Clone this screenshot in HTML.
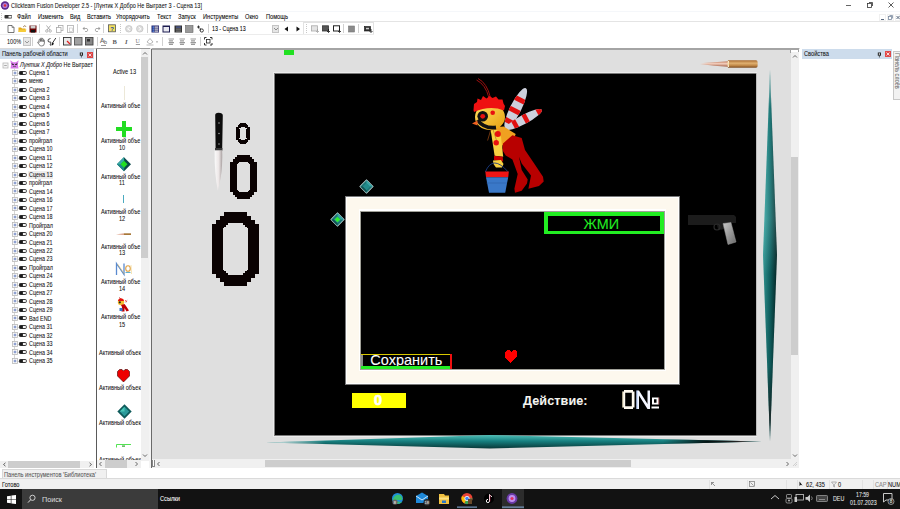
<!DOCTYPE html>
<html><head><meta charset="utf-8">
<style>
*{margin:0;padding:0;box-sizing:border-box}
html,body{width:900px;height:509px;overflow:hidden;background:#fff;font-family:"Liberation Sans",sans-serif;color:#000;position:relative}
.a{position:absolute}
.t{position:absolute;white-space:nowrap;font-size:6.5px;line-height:8px;transform-origin:0 0;-webkit-text-stroke:0.06px currentColor}
svg{position:absolute;overflow:visible}
</style></head><body>
<div class="a" style="left:0px;top:0px;width:900px;height:11px;background:#fff;"></div>
<svg style="left:0;top:0" width="11" height="11"><circle cx="5" cy="5.5" r="4.2" fill="#5b2a8c"/><circle cx="5" cy="5.5" r="2.6" fill="#b07ad8"/><circle cx="5" cy="5.5" r="1.2" fill="#e03030"/></svg>
<div class="t" style="left:11px;top:1.5px;font-size:6.5px;color:#111;transform:scaleX(0.847);">Clickteam Fusion Developer 2.5 - [Лунтик X Добро Не Выграет 3 - Сцена 13]</div>
<div class="a" style="left:846px;top:4.5px;width:5px;height:1px;background:#666;"></div>
<svg style="left:866px;top:1px" width="8" height="8"><rect x="1.5" y="2.5" width="4" height="4" fill="none" stroke="#333" stroke-width="0.8"/><path d="M3 1.5H6.5V5" fill="none" stroke="#333" stroke-width="0.8"/></svg>
<svg style="left:887px;top:1px" width="8" height="8"><path d="M1.5 1.5L6.5 6.5M6.5 1.5L1.5 6.5" stroke="#333" stroke-width="0.8"/></svg>
<div class="a" style="left:1px;top:13px;width:1px;height:1px;background:#c8c8c8;"></div>
<div class="a" style="left:1px;top:15px;width:1px;height:1px;background:#c8c8c8;"></div>
<div class="a" style="left:1px;top:17px;width:1px;height:1px;background:#c8c8c8;"></div>
<div class="a" style="left:1px;top:19px;width:1px;height:1px;background:#c8c8c8;"></div>
<svg style="left:4px;top:14px" width="9" height="6"><rect x="0.5" y="1" width="7.5" height="3.5" rx="0.8" fill="#333"/><rect x="4.5" y="1.8" width="3" height="1.9" fill="#f4f4f4"/></svg>
<div class="t" style="left:17px;top:13px;font-size:6.5px;color:#000;transform:scaleX(0.87);">Файл</div>
<div class="t" style="left:38px;top:13px;font-size:6.5px;color:#000;transform:scaleX(0.87);">Изменить</div>
<div class="t" style="left:70px;top:13px;font-size:6.5px;color:#000;transform:scaleX(0.87);">Вид</div>
<div class="t" style="left:87px;top:13px;font-size:6.5px;color:#000;transform:scaleX(0.87);">Вставить</div>
<div class="t" style="left:116px;top:13px;font-size:6.5px;color:#000;transform:scaleX(0.87);">Упорядочить</div>
<div class="t" style="left:157px;top:13px;font-size:6.5px;color:#000;transform:scaleX(0.87);">Текст</div>
<div class="t" style="left:178px;top:13px;font-size:6.5px;color:#000;transform:scaleX(0.87);">Запуск</div>
<div class="t" style="left:203px;top:13px;font-size:6.5px;color:#000;transform:scaleX(0.87);">Инструменты</div>
<div class="t" style="left:245px;top:13px;font-size:6.5px;color:#000;transform:scaleX(0.87);">Окно</div>
<div class="t" style="left:266px;top:13px;font-size:6.5px;color:#000;transform:scaleX(0.87);">Помощь</div>
<div class="a" style="left:879px;top:14px;width:7px;height:7px;background:#fff;border:1px solid #f0f0f0"></div>
<div class="a" style="left:887px;top:14px;width:7px;height:7px;background:#fff;border:1px solid #f0f0f0"></div>
<div class="a" style="left:895px;top:14px;width:5px;height:7px;background:#fff;border:1px solid #f0f0f0"></div>
<div class="a" style="left:881px;top:19px;width:3px;height:1px;background:#5a6a80;"></div>
<div class="a" style="left:0px;top:10.5px;width:900px;height:1px;background:#f5f7fa;"></div>
<svg style="left:887px;top:14px" width="7" height="7"><rect x="1.5" y="2.5" width="3" height="3" fill="none" stroke="#7a8aa0" stroke-width="0.8"/><path d="M2.5 1.5H5.5V4.5" fill="none" stroke="#7a8aa0" stroke-width="0.8"/></svg>
<svg style="left:895px;top:14px" width="6" height="7"><path d="M1.5 2L4.5 5M4.5 2L1.5 5" stroke="#5a6a80" stroke-width="1"/></svg>
<div class="a" style="left:0px;top:21px;width:900px;height:1px;background:#e4e4e4;"></div>
<svg style="left:7px;top:25px" width="8" height="8"><path d="M1 0.5H5L7 2.5V7.5H1Z" fill="#fff" stroke="#555" stroke-width="0.8"/><path d="M5 0.5V2.5H7" fill="none" stroke="#555" stroke-width="0.6"/></svg>
<svg style="left:18px;top:25px" width="9" height="8"><path d="M0.5 2.5H3L4 3.5H7.5V7H0.5Z" fill="#e2a618"/><path d="M1.5 4.5H8.5L7.5 7H0.5Z" fill="#f6cc3a"/><path d="M5 2L7 0.5L8 2" fill="none" stroke="#7a4a10" stroke-width="0.6"/></svg>
<svg style="left:29px;top:25px" width="8" height="8"><rect x="0.5" y="0.5" width="7" height="7" fill="#6a0000"/><rect x="1.5" y="0.5" width="5" height="3" fill="#d0d0d0"/><rect x="2" y="5" width="4" height="2.5" fill="#111"/></svg>
<div class="a" style="left:39px;top:24px;width:1px;height:9px;background:#d0d0d0;"></div>
<svg style="left:45px;top:25px" width="7" height="8"><path d="M1.5 0.5L5 5M5.5 0.5L2 5" stroke="#9a9a9a" stroke-width="0.8" fill="none"/><circle cx="1.8" cy="6" r="1.2" fill="none" stroke="#9a9a9a" stroke-width="0.7"/><circle cx="5.2" cy="6" r="1.2" fill="none" stroke="#9a9a9a" stroke-width="0.7"/></svg>
<svg style="left:56px;top:25px" width="8" height="8"><rect x="2.5" y="0.5" width="4.5" height="5" fill="#fff" stroke="#aaa" stroke-width="0.8"/><rect x="0.5" y="2.5" width="4.5" height="5" fill="#fff" stroke="#aaa" stroke-width="0.8"/></svg>
<svg style="left:67px;top:25px" width="8" height="8"><rect x="0.5" y="0.5" width="6" height="7" fill="#fff" stroke="#b0b0b0" stroke-width="0.8"/><rect x="2.5" y="3" width="3" height="3.5" fill="none" stroke="#c0c0c0" stroke-width="0.6"/></svg>
<div class="a" style="left:77px;top:24px;width:1px;height:9px;background:#d0d0d0;"></div>
<svg style="left:82px;top:26px" width="8" height="6"><path d="M1 2.5H5A2 2 0 0 1 5 5.5H3" fill="none" stroke="#999" stroke-width="0.8"/><path d="M0.5 2.5L2.5 0.8V4.2Z" fill="#999"/></svg>
<svg style="left:93px;top:26px" width="8" height="6"><path d="M7 2.5H3A2 2 0 0 0 3 5.5H5" fill="none" stroke="#999" stroke-width="0.8"/><path d="M7.5 2.5L5.5 0.8V4.2Z" fill="#999"/></svg>
<div class="a" style="left:103px;top:24px;width:1px;height:9px;background:#d0d0d0;"></div>
<svg style="left:108px;top:24px" width="8" height="9"><rect x="0.5" y="0.8" width="7" height="7" fill="#f4e060" stroke="#555" stroke-width="0.8"/><text x="2.2" y="6.5" font-size="6" font-weight="bold" fill="#2040a0" font-family="Liberation Sans">?</text></svg>
<div class="a" style="left:120px;top:24px;width:1px;height:1px;background:#c8c8c8;"></div>
<div class="a" style="left:120px;top:26px;width:1px;height:1px;background:#c8c8c8;"></div>
<div class="a" style="left:120px;top:28px;width:1px;height:1px;background:#c8c8c8;"></div>
<div class="a" style="left:120px;top:30px;width:1px;height:1px;background:#c8c8c8;"></div>
<div class="a" style="left:120px;top:32px;width:1px;height:1px;background:#c8c8c8;"></div>
<svg style="left:125px;top:25px" width="8" height="8"><circle cx="3.8" cy="3.8" r="3.3" fill="#ddd" stroke="#bbb" stroke-width="0.6"/><path d="M5 2L2.5 3.8L5 5.6" fill="none" stroke="#fff" stroke-width="1"/></svg>
<svg style="left:136px;top:25px" width="8" height="8"><circle cx="3.8" cy="3.8" r="3.3" fill="#ddd" stroke="#bbb" stroke-width="0.6"/><path d="M2.6 2L5.1 3.8L2.6 5.6" fill="none" stroke="#fff" stroke-width="1"/></svg>
<div class="a" style="left:147px;top:24px;width:1px;height:9px;background:#d0d0d0;"></div>
<svg style="left:151px;top:25px" width="9" height="8"><rect x="0.5" y="0.5" width="7.5" height="7" fill="#22226a"/><rect x="1.5" y="1.5" width="1.5" height="1.2" fill="#5aa0ff"/><rect x="3.5" y="1.5" width="3.8" height="1.2" fill="#ddd"/><rect x="1.5" y="3.5" width="1.5" height="1.2" fill="#5aa0ff"/><rect x="3.5" y="3.5" width="3.8" height="1.2" fill="#ddd"/><rect x="1.5" y="5.5" width="1.5" height="1.2" fill="#5aa0ff"/><rect x="3.5" y="5.5" width="3.8" height="1.2" fill="#ddd"/></svg>
<svg style="left:162px;top:25px" width="9" height="8"><rect x="0.5" y="0.5" width="7.5" height="7" fill="#1c1c50"/><rect x="1.5" y="2" width="5.5" height="4.5" fill="#e8e8f0"/></svg>
<svg style="left:174px;top:25px" width="9" height="8"><rect x="0.5" y="0.5" width="7.5" height="7" fill="#333"/><rect x="2" y="1.5" width="5" height="1.2" fill="#5060a0"/><rect x="2" y="3.5" width="5" height="1.2" fill="#777"/><rect x="2" y="5.5" width="5" height="1.2" fill="#777"/></svg>
<svg style="left:185px;top:25px" width="9" height="8"><rect x="0.5" y="0.5" width="7.5" height="7" fill="#9a9a9a" stroke="#666" stroke-width="0.6"/></svg>
<svg style="left:196px;top:25px" width="9" height="8"><path d="M1 2H4M2.5 0.5V3.5" stroke="#111" stroke-width="0.8"/><circle cx="5.8" cy="5.5" r="1.6" fill="none" stroke="#111" stroke-width="0.8"/><path d="M4.2 3V5.5" stroke="#111" stroke-width="0.8"/></svg>
<div class="a" style="left:208px;top:24px;width:1px;height:9px;background:#d0d0d0;"></div>
<div class="t" style="left:212px;top:25px;font-size:6.5px;color:#000;transform:scaleX(0.815);">13 - Сцена 13</div>
<div class="a" style="left:272px;top:25px;width:7px;height:8px;background:#e6e6e6;border:1px solid #c4c4c4"></div>
<svg style="left:273px;top:27px" width="6" height="4"><path d="M1 1L3 3L5 1" fill="none" stroke="#666" stroke-width="0.7"/></svg>
<svg style="left:284px;top:26px" width="5" height="6"><path d="M4 0.5V5.5L0.5 3Z" fill="#111"/></svg>
<svg style="left:296px;top:26px" width="5" height="6"><path d="M0.5 0.5V5.5L4 3Z" fill="#111"/></svg>
<div class="a" style="left:303px;top:24px;width:1px;height:9px;background:#d0d0d0;"></div>
<div class="a" style="left:306px;top:24px;width:1px;height:1px;background:#c8c8c8;"></div>
<div class="a" style="left:306px;top:26px;width:1px;height:1px;background:#c8c8c8;"></div>
<div class="a" style="left:306px;top:28px;width:1px;height:1px;background:#c8c8c8;"></div>
<div class="a" style="left:306px;top:30px;width:1px;height:1px;background:#c8c8c8;"></div>
<div class="a" style="left:306px;top:32px;width:1px;height:1px;background:#c8c8c8;"></div>
<div class="a" style="left:303px;top:22px;width:71px;height:13px;background:transparent;border:1px solid #e2e2e2"></div>
<div class="a" style="left:343px;top:24px;width:1px;height:9px;background:#d0d0d0;"></div>
<svg style="left:348px;top:25px" width="7" height="8"><rect x="0.5" y="1" width="6" height="6" fill="#8a8a8a" stroke="#777" stroke-width="0.6"/></svg>
<div class="a" style="left:358px;top:24px;width:1px;height:9px;background:#d0d0d0;"></div>
<svg style="left:364px;top:25px" width="9" height="8"><rect x="0.5" y="1.5" width="6" height="4.5" fill="#333" stroke="#111" stroke-width="0.6"/><rect x="2" y="2.8" width="3" height="1.5" fill="#ccc"/><path d="M7 4V7.2M5.5 6L7 7.5L8.5 6" fill="none" stroke="#111" stroke-width="0.8"/></svg>
<svg style="left:311px;top:25px" width="8" height="8"><rect x="0.5" y="0.8" width="6" height="5.2" fill="#e4e4e4" stroke="#aaa" stroke-width="0.8"/><path d="M6.5 4V7.2M5 6L6.5 7.5L8 6" fill="none" stroke="#999" stroke-width="0.7"/></svg>
<svg style="left:322px;top:25px" width="8" height="8"><rect x="0.5" y="0.8" width="6" height="5.2" fill="#555" stroke="#333" stroke-width="0.8"/><path d="M6.5 4V7.2M5 6L6.5 7.5L8 6" fill="none" stroke="#111" stroke-width="0.8"/></svg>
<svg style="left:333px;top:25px" width="8" height="8"><rect x="0.5" y="0.8" width="6" height="5.2" fill="#fff" stroke="#222" stroke-width="1"/><path d="M6.5 4V7.2M5 6L6.5 7.5L8 6" fill="none" stroke="#111" stroke-width="0.8"/></svg>
<div class="a" style="left:0px;top:34px;width:374px;height:1px;background:#ececec;"></div>
<div class="t" style="left:7px;top:37.5px;font-size:6.5px;color:#222;transform:scaleX(0.85);">100%</div>
<div class="a" style="left:23px;top:37px;width:8px;height:9px;background:#e6e6e6;border:1px solid #c4c4c4"></div>
<svg style="left:24px;top:40px" width="6" height="4"><path d="M1 1L3 3L5 1" fill="none" stroke="#777" stroke-width="0.7"/></svg>
<div class="a" style="left:32px;top:37px;width:1px;height:9px;background:#d0d0d0;"></div>
<svg style="left:37px;top:37px" width="9" height="10"><path d="M2 5.5V3Q2 2.2 2.7 2.2Q3.4 2.2 3.4 3V4.5V1.8Q3.4 1 4.1 1Q4.8 1 4.8 1.8V4.5V2.2Q4.8 1.4 5.5 1.4Q6.2 1.4 6.2 2.2V4.8V3.4Q6.2 2.8 6.8 2.8Q7.4 2.8 7.4 3.4V6Q7.4 9 4.8 9Q3 9 2 7.5L0.8 5.6Q0.5 4.8 1.2 4.8Q1.6 4.8 2 5.5Z" fill="#fff" stroke="#555" stroke-width="0.75"/></svg>
<svg style="left:47px;top:37px" width="10" height="10"><path d="M3.5 1.5Q0.5 2 1 4Q1.5 5.5 3 5Q4.5 4.5 3.5 6.5Q2.5 8.5 4 8.5" fill="none" stroke="#222" stroke-width="0.8"/><path d="M8.8 1L5.5 6" stroke="#222" stroke-width="0.9"/><path d="M5.8 5.5Q4.2 6.2 4.5 8.5Q6.5 8.2 6.8 6.4Z" fill="#111"/></svg>
<div class="a" style="left:59px;top:37px;width:1px;height:9px;background:#d0d0d0;"></div>
<svg style="left:63px;top:37px" width="9" height="9"><rect x="0.5" y="0.5" width="7.5" height="7.5" fill="#e8e8e8" stroke="#333" stroke-width="0.9"/><path d="M4 4L7 7" stroke="#e02020" stroke-width="1.2"/></svg>
<svg style="left:74px;top:37px" width="9" height="9"><rect x="0.5" y="0.5" width="7.5" height="7.5" fill="#a0a0a0" stroke="#555" stroke-width="0.9"/></svg>
<svg style="left:85px;top:37px" width="9" height="9"><rect x="0.5" y="0.5" width="7.5" height="7.5" fill="#888" stroke="#444" stroke-width="0.9"/><rect x="2" y="2" width="3" height="2.5" fill="#333"/></svg>
<div class="a" style="left:97px;top:37px;width:1px;height:9px;background:#d0d0d0;"></div>
<svg style="left:100px;top:37px" width="9" height="9"><text x="0" y="6" font-size="6.5" fill="#555" font-family="Liberation Sans">A</text><text x="4" y="7" font-size="5.5" fill="#555" font-family="Liberation Sans">b</text><path d="M1 8.5H6" stroke="#555" stroke-width="0.6"/></svg>
<svg style="left:112px;top:37px" width="8" height="9"><text x="0.5" y="6.8" font-size="6.5" font-weight="bold" fill="#5a5a5a" font-family="Liberation Serif">B</text></svg>
<svg style="left:124px;top:37px" width="8" height="9"><text x="1" y="6.8" font-size="6.5" font-style="italic" font-weight="bold" fill="#5a5a5a" font-family="Liberation Serif">I</text></svg>
<svg style="left:135px;top:37px" width="8" height="9"><text x="0.5" y="6" font-size="6" fill="#777" font-family="Liberation Serif">U</text><path d="M0.8 7.5H5" stroke="#777" stroke-width="0.7"/></svg>
<svg style="left:146px;top:37px" width="13" height="9"><path d="M1 5L4 1.5L7 5L4 7Z" fill="none" stroke="#999" stroke-width="0.7"/><path d="M0.5 8H7.5" stroke="#aaa" stroke-width="0.8"/><path d="M10 4.5L12 4.5L11 5.8Z" fill="#777"/></svg>
<div class="a" style="left:162px;top:37px;width:1px;height:9px;background:#d0d0d0;"></div>
<svg style="left:168px;top:38px" width="7" height="8"><path d="M0.5 1H6M1 2.8H5M0.5 4.6H6M1 6.4H5" stroke="#9a9a9a" stroke-width="1.2"/></svg>
<svg style="left:179px;top:38px" width="7" height="8"><path d="M0.5 1H6M1 2.8H5M0.5 4.6H6M1 6.4H5" stroke="#9a9a9a" stroke-width="1.2"/></svg>
<svg style="left:190px;top:38px" width="7" height="8"><path d="M0.5 1H6M1 2.8H5M0.5 4.6H6M1 6.4H5" stroke="#9a9a9a" stroke-width="1.2"/></svg>
<div class="a" style="left:200px;top:37px;width:1px;height:9px;background:#d0d0d0;"></div>
<svg style="left:204px;top:37px" width="9" height="9"><path d="M0.5 2.5V0.5H2.5M6 0.5H8V2.5M8 6V8H6M2.5 8H0.5V6" fill="none" stroke="#222" stroke-width="0.9"/><rect x="2.5" y="2.5" width="3.5" height="3.5" fill="none" stroke="#222" stroke-width="0.8"/></svg>
<div class="a" style="left:0px;top:48px;width:800px;height:1px;background:#dadada;"></div>
<div class="a" style="left:0px;top:49px;width:94px;height:10px;background:#cddcec;"></div>
<div class="t" style="left:2px;top:50px;font-size:6.5px;color:#111;transform:scaleX(0.87);">Панель рабочей области</div>
<svg style="left:78.5px;top:51.5px" width="5" height="6"><rect x="0.8" y="0.5" width="3.2" height="3.2" fill="#222"/><rect x="1.8" y="1.3" width="1.2" height="1.5" fill="#ddd"/><path d="M2.4 3.7V5.5" stroke="#222" stroke-width="0.7"/></svg>
<div class="a" style="left:86.5px;top:51.5px;width:6px;height:6px;background:#dc4444;"></div>
<svg style="left:86.5px;top:51.5px" width="6" height="6"><path d="M1.6 1.6L4.4 4.4M4.4 1.6L1.6 4.4" stroke="#fff" stroke-width="0.8"/></svg>
<svg style="left:2px;top:62px" width="7" height="7"><rect x="1" y="1" width="5" height="5" fill="#f4f4f4" stroke="#b8b8b8" stroke-width="0.8"/><path d="M2.2 3.5H4.8" stroke="#888" stroke-width="0.7"/></svg>
<svg style="left:10px;top:60px" width="9" height="9"><path d="M0.3 0.3L3 2.2H6L8.7 0.3L7.8 4.5L8.5 8.5H0.5L1.2 4.5Z" fill="#d878e8"/><path d="M1.5 3.2L4 4.2L3.5 5.2L1.8 4.6Z M7.5 3.2L5 4.2L5.5 5.2L7.2 4.6Z" fill="#222"/><path d="M3 6.5H6" stroke="#444" stroke-width="0.6"/></svg>
<div class="t" style="left:20px;top:61px;font-size:6.5px;color:#111;transform:scaleX(0.835);"><i>Лунтик X Добро</i> Не Выграет</div>
<div class="a" style="left:14px;top:68px;width:1px;height:292px;background:#d4d4d4;"></div>
<div class="a" style="left:17px;top:73.0px;width:2px;height:1px;background:#d0d0d0;"></div>
<svg style="left:11px;top:70.00px" width="7" height="7"><rect x="1.5" y="0.5" width="5" height="5" fill="#fafafa" stroke="#b8b8b8" stroke-width="0.8"/><path d="M2.6 3H5.4M4 1.6V4.4" stroke="#4060b0" stroke-width="0.7"/></svg>
<svg style="left:19px;top:71.00px" width="8" height="4"><rect x="0.5" y="0.5" width="6.8" height="3" rx="0.8" fill="#f4f4f4" stroke="#222" stroke-width="0.9"/><rect x="0.5" y="0.5" width="3.4" height="3" fill="#1a1a1a"/></svg>
<div class="t" style="left:29px;top:68.7px;font-size:6.5px;color:#111;transform:scaleX(0.83);">Сцена 1</div>
<div class="a" style="left:17px;top:81.46px;width:2px;height:1px;background:#d0d0d0;"></div>
<svg style="left:11px;top:78.46px" width="7" height="7"><rect x="1.5" y="0.5" width="5" height="5" fill="#fafafa" stroke="#b8b8b8" stroke-width="0.8"/><path d="M2.6 3H5.4M4 1.6V4.4" stroke="#4060b0" stroke-width="0.7"/></svg>
<svg style="left:19px;top:79.46px" width="8" height="4"><rect x="0.5" y="0.5" width="6.8" height="3" rx="0.8" fill="#f4f4f4" stroke="#222" stroke-width="0.9"/><rect x="0.5" y="0.5" width="3.4" height="3" fill="#1a1a1a"/></svg>
<div class="t" style="left:29px;top:77.19px;font-size:6.5px;color:#111;transform:scaleX(0.83);">меню</div>
<div class="a" style="left:17px;top:89.92px;width:2px;height:1px;background:#d0d0d0;"></div>
<svg style="left:11px;top:86.92px" width="7" height="7"><rect x="1.5" y="0.5" width="5" height="5" fill="#fafafa" stroke="#b8b8b8" stroke-width="0.8"/><path d="M2.6 3H5.4M4 1.6V4.4" stroke="#4060b0" stroke-width="0.7"/></svg>
<svg style="left:19px;top:87.92px" width="8" height="4"><rect x="0.5" y="0.5" width="6.8" height="3" rx="0.8" fill="#f4f4f4" stroke="#222" stroke-width="0.9"/><rect x="0.5" y="0.5" width="3.4" height="3" fill="#1a1a1a"/></svg>
<div class="t" style="left:29px;top:85.68px;font-size:6.5px;color:#111;transform:scaleX(0.83);">Сцена 2</div>
<div class="a" style="left:17px;top:98.38px;width:2px;height:1px;background:#d0d0d0;"></div>
<svg style="left:11px;top:95.38px" width="7" height="7"><rect x="1.5" y="0.5" width="5" height="5" fill="#fafafa" stroke="#b8b8b8" stroke-width="0.8"/><path d="M2.6 3H5.4M4 1.6V4.4" stroke="#4060b0" stroke-width="0.7"/></svg>
<svg style="left:19px;top:96.38px" width="8" height="4"><rect x="0.5" y="0.5" width="6.8" height="3" rx="0.8" fill="#f4f4f4" stroke="#222" stroke-width="0.9"/><rect x="0.5" y="0.5" width="3.4" height="3" fill="#1a1a1a"/></svg>
<div class="t" style="left:29px;top:94.17px;font-size:6.5px;color:#111;transform:scaleX(0.83);">Сцена 3</div>
<div class="a" style="left:17px;top:106.84px;width:2px;height:1px;background:#d0d0d0;"></div>
<svg style="left:11px;top:103.84px" width="7" height="7"><rect x="1.5" y="0.5" width="5" height="5" fill="#fafafa" stroke="#b8b8b8" stroke-width="0.8"/><path d="M2.6 3H5.4M4 1.6V4.4" stroke="#4060b0" stroke-width="0.7"/></svg>
<svg style="left:19px;top:104.84px" width="8" height="4"><rect x="0.5" y="0.5" width="6.8" height="3" rx="0.8" fill="#f4f4f4" stroke="#222" stroke-width="0.9"/><rect x="0.5" y="0.5" width="3.4" height="3" fill="#1a1a1a"/></svg>
<div class="t" style="left:29px;top:102.66px;font-size:6.5px;color:#111;transform:scaleX(0.83);">Сцена 4</div>
<div class="a" style="left:17px;top:115.3px;width:2px;height:1px;background:#d0d0d0;"></div>
<svg style="left:11px;top:112.30px" width="7" height="7"><rect x="1.5" y="0.5" width="5" height="5" fill="#fafafa" stroke="#b8b8b8" stroke-width="0.8"/><path d="M2.6 3H5.4M4 1.6V4.4" stroke="#4060b0" stroke-width="0.7"/></svg>
<svg style="left:19px;top:113.30px" width="8" height="4"><rect x="0.5" y="0.5" width="6.8" height="3" rx="0.8" fill="#f4f4f4" stroke="#222" stroke-width="0.9"/><rect x="0.5" y="0.5" width="3.4" height="3" fill="#1a1a1a"/></svg>
<div class="t" style="left:29px;top:111.15px;font-size:6.5px;color:#111;transform:scaleX(0.83);">Сцена 5</div>
<div class="a" style="left:17px;top:123.76px;width:2px;height:1px;background:#d0d0d0;"></div>
<svg style="left:11px;top:120.76px" width="7" height="7"><rect x="1.5" y="0.5" width="5" height="5" fill="#fafafa" stroke="#b8b8b8" stroke-width="0.8"/><path d="M2.6 3H5.4M4 1.6V4.4" stroke="#4060b0" stroke-width="0.7"/></svg>
<svg style="left:19px;top:121.76px" width="8" height="4"><rect x="0.5" y="0.5" width="6.8" height="3" rx="0.8" fill="#f4f4f4" stroke="#222" stroke-width="0.9"/><rect x="0.5" y="0.5" width="3.4" height="3" fill="#1a1a1a"/></svg>
<div class="t" style="left:29px;top:119.64px;font-size:6.5px;color:#111;transform:scaleX(0.83);">Сцена 6</div>
<div class="a" style="left:17px;top:132.22px;width:2px;height:1px;background:#d0d0d0;"></div>
<svg style="left:11px;top:129.22px" width="7" height="7"><rect x="1.5" y="0.5" width="5" height="5" fill="#fafafa" stroke="#b8b8b8" stroke-width="0.8"/><path d="M2.6 3H5.4M4 1.6V4.4" stroke="#4060b0" stroke-width="0.7"/></svg>
<svg style="left:19px;top:130.22px" width="8" height="4"><rect x="0.5" y="0.5" width="6.8" height="3" rx="0.8" fill="#f4f4f4" stroke="#222" stroke-width="0.9"/><rect x="0.5" y="0.5" width="3.4" height="3" fill="#1a1a1a"/></svg>
<div class="t" style="left:29px;top:128.13px;font-size:6.5px;color:#111;transform:scaleX(0.83);">Сцена 7</div>
<div class="a" style="left:17px;top:140.68px;width:2px;height:1px;background:#d0d0d0;"></div>
<svg style="left:11px;top:137.68px" width="7" height="7"><rect x="1.5" y="0.5" width="5" height="5" fill="#fafafa" stroke="#b8b8b8" stroke-width="0.8"/><path d="M2.6 3H5.4M4 1.6V4.4" stroke="#4060b0" stroke-width="0.7"/></svg>
<svg style="left:19px;top:138.68px" width="8" height="4"><rect x="0.5" y="0.5" width="6.8" height="3" rx="0.8" fill="#f4f4f4" stroke="#222" stroke-width="0.9"/><rect x="0.5" y="0.5" width="3.4" height="3" fill="#1a1a1a"/></svg>
<div class="t" style="left:29px;top:136.62px;font-size:6.5px;color:#111;transform:scaleX(0.83);">пройграл</div>
<div class="a" style="left:17px;top:149.14px;width:2px;height:1px;background:#d0d0d0;"></div>
<svg style="left:11px;top:146.14px" width="7" height="7"><rect x="1.5" y="0.5" width="5" height="5" fill="#fafafa" stroke="#b8b8b8" stroke-width="0.8"/><path d="M2.6 3H5.4M4 1.6V4.4" stroke="#4060b0" stroke-width="0.7"/></svg>
<svg style="left:19px;top:147.14px" width="8" height="4"><rect x="0.5" y="0.5" width="6.8" height="3" rx="0.8" fill="#f4f4f4" stroke="#222" stroke-width="0.9"/><rect x="0.5" y="0.5" width="3.4" height="3" fill="#1a1a1a"/></svg>
<div class="t" style="left:29px;top:145.11px;font-size:6.5px;color:#111;transform:scaleX(0.83);">Сцена 10</div>
<div class="a" style="left:17px;top:157.6px;width:2px;height:1px;background:#d0d0d0;"></div>
<svg style="left:11px;top:154.60px" width="7" height="7"><rect x="1.5" y="0.5" width="5" height="5" fill="#fafafa" stroke="#b8b8b8" stroke-width="0.8"/><path d="M2.6 3H5.4M4 1.6V4.4" stroke="#4060b0" stroke-width="0.7"/></svg>
<svg style="left:19px;top:155.60px" width="8" height="4"><rect x="0.5" y="0.5" width="6.8" height="3" rx="0.8" fill="#f4f4f4" stroke="#222" stroke-width="0.9"/><rect x="0.5" y="0.5" width="3.4" height="3" fill="#1a1a1a"/></svg>
<div class="t" style="left:29px;top:153.6px;font-size:6.5px;color:#111;transform:scaleX(0.83);">Сцена 11</div>
<div class="a" style="left:17px;top:166.06px;width:2px;height:1px;background:#d0d0d0;"></div>
<svg style="left:11px;top:163.06px" width="7" height="7"><rect x="1.5" y="0.5" width="5" height="5" fill="#fafafa" stroke="#b8b8b8" stroke-width="0.8"/><path d="M2.6 3H5.4M4 1.6V4.4" stroke="#4060b0" stroke-width="0.7"/></svg>
<svg style="left:19px;top:164.06px" width="8" height="4"><rect x="0.5" y="0.5" width="6.8" height="3" rx="0.8" fill="#f4f4f4" stroke="#222" stroke-width="0.9"/><rect x="0.5" y="0.5" width="3.4" height="3" fill="#1a1a1a"/></svg>
<div class="t" style="left:29px;top:162.09px;font-size:6.5px;color:#111;transform:scaleX(0.83);">Сцена 12</div>
<div class="a" style="left:17px;top:174.52px;width:2px;height:1px;background:#d0d0d0;"></div>
<svg style="left:11px;top:171.52px" width="7" height="7"><rect x="1.5" y="0.5" width="5" height="5" fill="#fafafa" stroke="#b8b8b8" stroke-width="0.8"/><path d="M2.6 3H5.4M4 1.6V4.4" stroke="#4060b0" stroke-width="0.7"/></svg>
<svg style="left:19px;top:172.52px" width="8" height="4"><rect x="0.5" y="0.5" width="6.8" height="3" rx="0.8" fill="#f4f4f4" stroke="#222" stroke-width="0.9"/><rect x="0.5" y="0.5" width="3.4" height="3" fill="#1a1a1a"/></svg>
<div class="a" style="left:28.3px;top:170.92px;width:24.5px;height:8.3px;background:#ededed;"></div>
<div class="t" style="left:29px;top:170.58px;font-size:6.5px;color:#111;transform:scaleX(0.83);">Сцена 13</div>
<div class="a" style="left:17px;top:182.98px;width:2px;height:1px;background:#d0d0d0;"></div>
<svg style="left:11px;top:179.98px" width="7" height="7"><rect x="1.5" y="0.5" width="5" height="5" fill="#fafafa" stroke="#b8b8b8" stroke-width="0.8"/><path d="M2.6 3H5.4M4 1.6V4.4" stroke="#4060b0" stroke-width="0.7"/></svg>
<svg style="left:19px;top:180.98px" width="8" height="4"><rect x="0.5" y="0.5" width="6.8" height="3" rx="0.8" fill="#f4f4f4" stroke="#222" stroke-width="0.9"/><rect x="0.5" y="0.5" width="3.4" height="3" fill="#1a1a1a"/></svg>
<div class="t" style="left:29px;top:179.07px;font-size:6.5px;color:#111;transform:scaleX(0.83);">пройграл</div>
<div class="a" style="left:17px;top:191.44px;width:2px;height:1px;background:#d0d0d0;"></div>
<svg style="left:11px;top:188.44px" width="7" height="7"><rect x="1.5" y="0.5" width="5" height="5" fill="#fafafa" stroke="#b8b8b8" stroke-width="0.8"/><path d="M2.6 3H5.4M4 1.6V4.4" stroke="#4060b0" stroke-width="0.7"/></svg>
<svg style="left:19px;top:189.44px" width="8" height="4"><rect x="0.5" y="0.5" width="6.8" height="3" rx="0.8" fill="#f4f4f4" stroke="#222" stroke-width="0.9"/><rect x="0.5" y="0.5" width="3.4" height="3" fill="#1a1a1a"/></svg>
<div class="t" style="left:29px;top:187.56px;font-size:6.5px;color:#111;transform:scaleX(0.83);">Сцена 14</div>
<div class="a" style="left:17px;top:199.9px;width:2px;height:1px;background:#d0d0d0;"></div>
<svg style="left:11px;top:196.90px" width="7" height="7"><rect x="1.5" y="0.5" width="5" height="5" fill="#fafafa" stroke="#b8b8b8" stroke-width="0.8"/><path d="M2.6 3H5.4M4 1.6V4.4" stroke="#4060b0" stroke-width="0.7"/></svg>
<svg style="left:19px;top:197.90px" width="8" height="4"><rect x="0.5" y="0.5" width="6.8" height="3" rx="0.8" fill="#f4f4f4" stroke="#222" stroke-width="0.9"/><rect x="0.5" y="0.5" width="3.4" height="3" fill="#1a1a1a"/></svg>
<div class="t" style="left:29px;top:196.05px;font-size:6.5px;color:#111;transform:scaleX(0.83);">Сцена 16</div>
<div class="a" style="left:17px;top:208.36px;width:2px;height:1px;background:#d0d0d0;"></div>
<svg style="left:11px;top:205.36px" width="7" height="7"><rect x="1.5" y="0.5" width="5" height="5" fill="#fafafa" stroke="#b8b8b8" stroke-width="0.8"/><path d="M2.6 3H5.4M4 1.6V4.4" stroke="#4060b0" stroke-width="0.7"/></svg>
<svg style="left:19px;top:206.36px" width="8" height="4"><rect x="0.5" y="0.5" width="6.8" height="3" rx="0.8" fill="#f4f4f4" stroke="#222" stroke-width="0.9"/><rect x="0.5" y="0.5" width="3.4" height="3" fill="#1a1a1a"/></svg>
<div class="t" style="left:29px;top:204.54px;font-size:6.5px;color:#111;transform:scaleX(0.83);">Сцена 17</div>
<div class="a" style="left:17px;top:216.82px;width:2px;height:1px;background:#d0d0d0;"></div>
<svg style="left:11px;top:213.82px" width="7" height="7"><rect x="1.5" y="0.5" width="5" height="5" fill="#fafafa" stroke="#b8b8b8" stroke-width="0.8"/><path d="M2.6 3H5.4M4 1.6V4.4" stroke="#4060b0" stroke-width="0.7"/></svg>
<svg style="left:19px;top:214.82px" width="8" height="4"><rect x="0.5" y="0.5" width="6.8" height="3" rx="0.8" fill="#f4f4f4" stroke="#222" stroke-width="0.9"/><rect x="0.5" y="0.5" width="3.4" height="3" fill="#1a1a1a"/></svg>
<div class="t" style="left:29px;top:213.03px;font-size:6.5px;color:#111;transform:scaleX(0.83);">Сцена 18</div>
<div class="a" style="left:17px;top:225.28px;width:2px;height:1px;background:#d0d0d0;"></div>
<svg style="left:11px;top:222.28px" width="7" height="7"><rect x="1.5" y="0.5" width="5" height="5" fill="#fafafa" stroke="#b8b8b8" stroke-width="0.8"/><path d="M2.6 3H5.4M4 1.6V4.4" stroke="#4060b0" stroke-width="0.7"/></svg>
<svg style="left:19px;top:223.28px" width="8" height="4"><rect x="0.5" y="0.5" width="6.8" height="3" rx="0.8" fill="#f4f4f4" stroke="#222" stroke-width="0.9"/><rect x="0.5" y="0.5" width="3.4" height="3" fill="#1a1a1a"/></svg>
<div class="t" style="left:29px;top:221.52px;font-size:6.5px;color:#111;transform:scaleX(0.83);">Пройграл</div>
<div class="a" style="left:17px;top:233.74px;width:2px;height:1px;background:#d0d0d0;"></div>
<svg style="left:11px;top:230.74px" width="7" height="7"><rect x="1.5" y="0.5" width="5" height="5" fill="#fafafa" stroke="#b8b8b8" stroke-width="0.8"/><path d="M2.6 3H5.4M4 1.6V4.4" stroke="#4060b0" stroke-width="0.7"/></svg>
<svg style="left:19px;top:231.74px" width="8" height="4"><rect x="0.5" y="0.5" width="6.8" height="3" rx="0.8" fill="#f4f4f4" stroke="#222" stroke-width="0.9"/><rect x="0.5" y="0.5" width="3.4" height="3" fill="#1a1a1a"/></svg>
<div class="t" style="left:29px;top:230.01px;font-size:6.5px;color:#111;transform:scaleX(0.83);">Сцена 20</div>
<div class="a" style="left:17px;top:242.2px;width:2px;height:1px;background:#d0d0d0;"></div>
<svg style="left:11px;top:239.20px" width="7" height="7"><rect x="1.5" y="0.5" width="5" height="5" fill="#fafafa" stroke="#b8b8b8" stroke-width="0.8"/><path d="M2.6 3H5.4M4 1.6V4.4" stroke="#4060b0" stroke-width="0.7"/></svg>
<svg style="left:19px;top:240.20px" width="8" height="4"><rect x="0.5" y="0.5" width="6.8" height="3" rx="0.8" fill="#f4f4f4" stroke="#222" stroke-width="0.9"/><rect x="0.5" y="0.5" width="3.4" height="3" fill="#1a1a1a"/></svg>
<div class="t" style="left:29px;top:238.5px;font-size:6.5px;color:#111;transform:scaleX(0.83);">Сцена 21</div>
<div class="a" style="left:17px;top:250.66px;width:2px;height:1px;background:#d0d0d0;"></div>
<svg style="left:11px;top:247.66px" width="7" height="7"><rect x="1.5" y="0.5" width="5" height="5" fill="#fafafa" stroke="#b8b8b8" stroke-width="0.8"/><path d="M2.6 3H5.4M4 1.6V4.4" stroke="#4060b0" stroke-width="0.7"/></svg>
<svg style="left:19px;top:248.66px" width="8" height="4"><rect x="0.5" y="0.5" width="6.8" height="3" rx="0.8" fill="#f4f4f4" stroke="#222" stroke-width="0.9"/><rect x="0.5" y="0.5" width="3.4" height="3" fill="#1a1a1a"/></svg>
<div class="t" style="left:29px;top:246.99px;font-size:6.5px;color:#111;transform:scaleX(0.83);">Сцена 22</div>
<div class="a" style="left:17px;top:259.12px;width:2px;height:1px;background:#d0d0d0;"></div>
<svg style="left:11px;top:256.12px" width="7" height="7"><rect x="1.5" y="0.5" width="5" height="5" fill="#fafafa" stroke="#b8b8b8" stroke-width="0.8"/><path d="M2.6 3H5.4M4 1.6V4.4" stroke="#4060b0" stroke-width="0.7"/></svg>
<svg style="left:19px;top:257.12px" width="8" height="4"><rect x="0.5" y="0.5" width="6.8" height="3" rx="0.8" fill="#f4f4f4" stroke="#222" stroke-width="0.9"/><rect x="0.5" y="0.5" width="3.4" height="3" fill="#1a1a1a"/></svg>
<div class="t" style="left:29px;top:255.48px;font-size:6.5px;color:#111;transform:scaleX(0.83);">Сцена 23</div>
<div class="a" style="left:17px;top:267.58px;width:2px;height:1px;background:#d0d0d0;"></div>
<svg style="left:11px;top:264.58px" width="7" height="7"><rect x="1.5" y="0.5" width="5" height="5" fill="#fafafa" stroke="#b8b8b8" stroke-width="0.8"/><path d="M2.6 3H5.4M4 1.6V4.4" stroke="#4060b0" stroke-width="0.7"/></svg>
<svg style="left:19px;top:265.58px" width="8" height="4"><rect x="0.5" y="0.5" width="6.8" height="3" rx="0.8" fill="#f4f4f4" stroke="#222" stroke-width="0.9"/><rect x="0.5" y="0.5" width="3.4" height="3" fill="#1a1a1a"/></svg>
<div class="t" style="left:29px;top:263.97px;font-size:6.5px;color:#111;transform:scaleX(0.83);">Пройграл</div>
<div class="a" style="left:17px;top:276.04px;width:2px;height:1px;background:#d0d0d0;"></div>
<svg style="left:11px;top:273.04px" width="7" height="7"><rect x="1.5" y="0.5" width="5" height="5" fill="#fafafa" stroke="#b8b8b8" stroke-width="0.8"/><path d="M2.6 3H5.4M4 1.6V4.4" stroke="#4060b0" stroke-width="0.7"/></svg>
<svg style="left:19px;top:274.04px" width="8" height="4"><rect x="0.5" y="0.5" width="6.8" height="3" rx="0.8" fill="#f4f4f4" stroke="#222" stroke-width="0.9"/><rect x="0.5" y="0.5" width="3.4" height="3" fill="#1a1a1a"/></svg>
<div class="t" style="left:29px;top:272.46px;font-size:6.5px;color:#111;transform:scaleX(0.83);">Сцена 24</div>
<div class="a" style="left:17px;top:284.5px;width:2px;height:1px;background:#d0d0d0;"></div>
<svg style="left:11px;top:281.50px" width="7" height="7"><rect x="1.5" y="0.5" width="5" height="5" fill="#fafafa" stroke="#b8b8b8" stroke-width="0.8"/><path d="M2.6 3H5.4M4 1.6V4.4" stroke="#4060b0" stroke-width="0.7"/></svg>
<svg style="left:19px;top:282.50px" width="8" height="4"><rect x="0.5" y="0.5" width="6.8" height="3" rx="0.8" fill="#f4f4f4" stroke="#222" stroke-width="0.9"/><rect x="0.5" y="0.5" width="3.4" height="3" fill="#1a1a1a"/></svg>
<div class="t" style="left:29px;top:280.95px;font-size:6.5px;color:#111;transform:scaleX(0.83);">Сцена 26</div>
<div class="a" style="left:17px;top:292.96px;width:2px;height:1px;background:#d0d0d0;"></div>
<svg style="left:11px;top:289.96px" width="7" height="7"><rect x="1.5" y="0.5" width="5" height="5" fill="#fafafa" stroke="#b8b8b8" stroke-width="0.8"/><path d="M2.6 3H5.4M4 1.6V4.4" stroke="#4060b0" stroke-width="0.7"/></svg>
<svg style="left:19px;top:290.96px" width="8" height="4"><rect x="0.5" y="0.5" width="6.8" height="3" rx="0.8" fill="#f4f4f4" stroke="#222" stroke-width="0.9"/><rect x="0.5" y="0.5" width="3.4" height="3" fill="#1a1a1a"/></svg>
<div class="t" style="left:29px;top:289.44px;font-size:6.5px;color:#111;transform:scaleX(0.83);">Сцена 27</div>
<div class="a" style="left:17px;top:301.42px;width:2px;height:1px;background:#d0d0d0;"></div>
<svg style="left:11px;top:298.42px" width="7" height="7"><rect x="1.5" y="0.5" width="5" height="5" fill="#fafafa" stroke="#b8b8b8" stroke-width="0.8"/><path d="M2.6 3H5.4M4 1.6V4.4" stroke="#4060b0" stroke-width="0.7"/></svg>
<svg style="left:19px;top:299.42px" width="8" height="4"><rect x="0.5" y="0.5" width="6.8" height="3" rx="0.8" fill="#f4f4f4" stroke="#222" stroke-width="0.9"/><rect x="0.5" y="0.5" width="3.4" height="3" fill="#1a1a1a"/></svg>
<div class="t" style="left:29px;top:297.93px;font-size:6.5px;color:#111;transform:scaleX(0.83);">Сцена 28</div>
<div class="a" style="left:17px;top:309.88px;width:2px;height:1px;background:#d0d0d0;"></div>
<svg style="left:11px;top:306.88px" width="7" height="7"><rect x="1.5" y="0.5" width="5" height="5" fill="#fafafa" stroke="#b8b8b8" stroke-width="0.8"/><path d="M2.6 3H5.4M4 1.6V4.4" stroke="#4060b0" stroke-width="0.7"/></svg>
<svg style="left:19px;top:307.88px" width="8" height="4"><rect x="0.5" y="0.5" width="6.8" height="3" rx="0.8" fill="#f4f4f4" stroke="#222" stroke-width="0.9"/><rect x="0.5" y="0.5" width="3.4" height="3" fill="#1a1a1a"/></svg>
<div class="t" style="left:29px;top:306.42px;font-size:6.5px;color:#111;transform:scaleX(0.83);">Сцена 29</div>
<div class="a" style="left:17px;top:318.34px;width:2px;height:1px;background:#d0d0d0;"></div>
<svg style="left:11px;top:315.34px" width="7" height="7"><rect x="1.5" y="0.5" width="5" height="5" fill="#fafafa" stroke="#b8b8b8" stroke-width="0.8"/><path d="M2.6 3H5.4M4 1.6V4.4" stroke="#4060b0" stroke-width="0.7"/></svg>
<svg style="left:19px;top:316.34px" width="8" height="4"><rect x="0.5" y="0.5" width="6.8" height="3" rx="0.8" fill="#f4f4f4" stroke="#222" stroke-width="0.9"/><rect x="0.5" y="0.5" width="3.4" height="3" fill="#1a1a1a"/></svg>
<div class="t" style="left:29px;top:314.91px;font-size:6.5px;color:#111;transform:scaleX(0.83);">Bad END</div>
<div class="a" style="left:17px;top:326.8px;width:2px;height:1px;background:#d0d0d0;"></div>
<svg style="left:11px;top:323.80px" width="7" height="7"><rect x="1.5" y="0.5" width="5" height="5" fill="#fafafa" stroke="#b8b8b8" stroke-width="0.8"/><path d="M2.6 3H5.4M4 1.6V4.4" stroke="#4060b0" stroke-width="0.7"/></svg>
<svg style="left:19px;top:324.80px" width="8" height="4"><rect x="0.5" y="0.5" width="6.8" height="3" rx="0.8" fill="#f4f4f4" stroke="#222" stroke-width="0.9"/><rect x="0.5" y="0.5" width="3.4" height="3" fill="#1a1a1a"/></svg>
<div class="t" style="left:29px;top:323.4px;font-size:6.5px;color:#111;transform:scaleX(0.83);">Сцена 31</div>
<div class="a" style="left:17px;top:335.26px;width:2px;height:1px;background:#d0d0d0;"></div>
<svg style="left:11px;top:332.26px" width="7" height="7"><rect x="1.5" y="0.5" width="5" height="5" fill="#fafafa" stroke="#b8b8b8" stroke-width="0.8"/><path d="M2.6 3H5.4M4 1.6V4.4" stroke="#4060b0" stroke-width="0.7"/></svg>
<svg style="left:19px;top:333.26px" width="8" height="4"><rect x="0.5" y="0.5" width="6.8" height="3" rx="0.8" fill="#f4f4f4" stroke="#222" stroke-width="0.9"/><rect x="0.5" y="0.5" width="3.4" height="3" fill="#1a1a1a"/></svg>
<div class="t" style="left:29px;top:331.89px;font-size:6.5px;color:#111;transform:scaleX(0.83);">Сцена 32</div>
<div class="a" style="left:17px;top:343.72px;width:2px;height:1px;background:#d0d0d0;"></div>
<svg style="left:11px;top:340.72px" width="7" height="7"><rect x="1.5" y="0.5" width="5" height="5" fill="#fafafa" stroke="#b8b8b8" stroke-width="0.8"/><path d="M2.6 3H5.4M4 1.6V4.4" stroke="#4060b0" stroke-width="0.7"/></svg>
<svg style="left:19px;top:341.72px" width="8" height="4"><rect x="0.5" y="0.5" width="6.8" height="3" rx="0.8" fill="#f4f4f4" stroke="#222" stroke-width="0.9"/><rect x="0.5" y="0.5" width="3.4" height="3" fill="#1a1a1a"/></svg>
<div class="t" style="left:29px;top:340.38px;font-size:6.5px;color:#111;transform:scaleX(0.83);">Сцена 33</div>
<div class="a" style="left:17px;top:352.18px;width:2px;height:1px;background:#d0d0d0;"></div>
<svg style="left:11px;top:349.18px" width="7" height="7"><rect x="1.5" y="0.5" width="5" height="5" fill="#fafafa" stroke="#b8b8b8" stroke-width="0.8"/><path d="M2.6 3H5.4M4 1.6V4.4" stroke="#4060b0" stroke-width="0.7"/></svg>
<svg style="left:19px;top:350.18px" width="8" height="4"><rect x="0.5" y="0.5" width="6.8" height="3" rx="0.8" fill="#f4f4f4" stroke="#222" stroke-width="0.9"/><rect x="0.5" y="0.5" width="3.4" height="3" fill="#1a1a1a"/></svg>
<div class="t" style="left:29px;top:348.87px;font-size:6.5px;color:#111;transform:scaleX(0.83);">Сцена 34</div>
<div class="a" style="left:17px;top:360.64px;width:2px;height:1px;background:#d0d0d0;"></div>
<svg style="left:11px;top:357.64px" width="7" height="7"><rect x="1.5" y="0.5" width="5" height="5" fill="#fafafa" stroke="#b8b8b8" stroke-width="0.8"/><path d="M2.6 3H5.4M4 1.6V4.4" stroke="#4060b0" stroke-width="0.7"/></svg>
<svg style="left:19px;top:358.64px" width="8" height="4"><rect x="0.5" y="0.5" width="6.8" height="3" rx="0.8" fill="#f4f4f4" stroke="#222" stroke-width="0.9"/><rect x="0.5" y="0.5" width="3.4" height="3" fill="#1a1a1a"/></svg>
<div class="t" style="left:29px;top:357.36px;font-size:6.5px;color:#111;transform:scaleX(0.83);">Сцена 35</div>
<div class="a" style="left:0px;top:461px;width:94px;height:7px;background:#f0f0f0;"></div>
<div class="a" style="left:8px;top:461px;width:72px;height:7px;background:#cdcdcd;"></div>
<svg style="left:2px;top:462px" width="5" height="5"><path d="M3.5 0.8L1.5 2.5L3.5 4.2" fill="none" stroke="#444" stroke-width="0.8"/></svg>
<svg style="left:88px;top:462px" width="5" height="5"><path d="M1.5 0.8L3.5 2.5L1.5 4.2" fill="none" stroke="#444" stroke-width="0.8"/></svg>
<div class="a" style="left:96px;top:49px;width:1px;height:419px;background:#5a5a5a;"></div>
<div class="a" style="left:141px;top:49px;width:8px;height:412px;background:#f0f0f0;"></div>
<div class="a" style="left:141px;top:57px;width:7px;height:201px;background:#cdcdcd;"></div>
<svg style="left:142px;top:51px" width="6" height="5"><path d="M1 3.5L3 1.5L5 3.5" fill="none" stroke="#444" stroke-width="0.8"/></svg>
<svg style="left:142px;top:453px" width="6" height="5"><path d="M1 1.5L3 3.5L5 1.5" fill="none" stroke="#444" stroke-width="0.8"/></svg>
<div class="a" style="left:97px;top:460px;width:44px;height:8px;background:#f0f0f0;"></div>
<div class="a" style="left:105px;top:460px;width:22px;height:8px;background:#cdcdcd;"></div>
<svg style="left:98px;top:461px" width="5" height="6"><path d="M3.5 1L1.5 3L3.5 5" fill="none" stroke="#444" stroke-width="0.8"/></svg>
<svg style="left:134px;top:461px" width="5" height="6"><path d="M1.5 1L3.5 3L1.5 5" fill="none" stroke="#444" stroke-width="0.8"/></svg>
<div class="a" style="left:149px;top:49px;width:2px;height:419px;background:#f4f4f4;"></div>
<div class="a" style="left:151px;top:49px;width:1px;height:419px;background:#6a6a6a;"></div>
<div class="a" style="left:96px;top:48px;width:54px;height:1px;background:#9a9a9a;"></div>
<div class="a" style="left:97px;top:67.5px;width:44px;height:8px;overflow:hidden"><div class="t" style="left:15.5px;top:0;transform:scaleX(.86);color:#111">Active 13</div></div>
<div class="a" style="left:123.5px;top:86px;width:1px;height:14px;background:#ece8d8;"></div>
<div class="a" style="left:97px;top:101.5px;width:44px;height:8px;overflow:hidden"><div class="t" style="left:3.8px;top:0;transform:scaleX(.86);color:#111">Активный объе</div></div>
<svg style="left:116px;top:121px" width="16" height="16"><path d="M6 0H10V6H16V10H10V16H6V10H0V6H6Z" fill="#22dd22"/></svg>
<div class="a" style="left:97px;top:137.4px;width:44px;height:8px;overflow:hidden"><div class="t" style="left:3.8px;top:0;transform:scaleX(.86);color:#111">Активный объе</div></div>
<div class="t" style="left:119px;top:144px;transform:scaleX(.86);color:#111">10</div>
<svg style="left:116.5px;top:156.5px" width="15" height="15"><path d="M7 0.3L14 7.3L7 14.3L0 7.3Z" fill="#0c4a4a"/><path d="M7 0.3L0 7.3L7 14.3L7.6 7.3Z" fill="#1e8a8a"/><path d="M7 0.3L0 7.3L3.5 7.3L7 3.8Z" fill="#3aaaa8"/><path d="M7 3.8L10.5 7.3L7 10.8L3.5 7.3Z" fill="#22e022"/></svg>
<div class="a" style="left:97px;top:172.5px;width:44px;height:8px;overflow:hidden"><div class="t" style="left:3.8px;top:0;transform:scaleX(.86);color:#111">Активный объе</div></div>
<div class="t" style="left:119px;top:179px;transform:scaleX(.86);color:#111">11</div>
<div class="a" style="left:123px;top:195px;width:1px;height:8px;background:#4aaac0;"></div>
<div class="a" style="left:97px;top:208px;width:44px;height:8px;overflow:hidden"><div class="t" style="left:3.8px;top:0;transform:scaleX(.86);color:#111">Активный объе</div></div>
<div class="t" style="left:119px;top:214.6px;transform:scaleX(.86);color:#111">12</div>
<svg style="left:115px;top:231.5px" width="17" height="4"><path d="M1 2.2L9 1.6V2.8Z" fill="#d08060"/><path d="M9 1.3H16V3H9Z" fill="#a87838"/></svg>
<div class="a" style="left:97px;top:242.5px;width:44px;height:8px;overflow:hidden"><div class="t" style="left:3.8px;top:0;transform:scaleX(.86);color:#111">Активный объе</div></div>
<div class="t" style="left:119px;top:249.4px;transform:scaleX(.86);color:#111">13</div>
<svg style="left:115px;top:262px" width="18" height="14"><path d="M1.5 13V1.5L9 12.5V1.5" fill="none" stroke="#5a8ad0" stroke-width="1.3"/><path d="M2.5 2L9.5 12" stroke="#e8c060" stroke-width="0.6"/><ellipse cx="13" cy="6.5" rx="2.3" ry="2.8" fill="none" stroke="#e0a040" stroke-width="1.1"/><path d="M10.5 10.5H15.5" stroke="#60b0d0" stroke-width="1"/><path d="M16 3L16.5 12" stroke="#f0d080" stroke-width="0.6"/></svg>
<div class="a" style="left:97px;top:277.5px;width:44px;height:8px;overflow:hidden"><div class="t" style="left:3.8px;top:0;transform:scaleX(.86);color:#111">Активный объе</div></div>
<div class="t" style="left:119px;top:285px;transform:scaleX(.86);color:#111">14</div>
<svg style="left:117px;top:297px" width="13" height="15"><path d="M2 0.5L4.5 2.5" stroke="#a00" stroke-width="0.7"/><circle cx="4" cy="5" r="3.2" fill="#f4c030"/><path d="M0.8 4Q1.5 1 4 1.2Q6.8 1.5 7 4Z" fill="#e81010"/><circle cx="2.8" cy="5.3" r="1.1" fill="#222"/><path d="M7 6L11.5 1.5L9.5 6Z" fill="#e0e0e8"/><path d="M8 3.5L10 4.5" stroke="#e01010" stroke-width="0.8"/><path d="M4 8L7.5 7L9 9L12 13.5L9.5 14.5L7.5 11V14.5H4.5L5 10Z" fill="#c00000"/><rect x="2.5" y="11" width="3" height="3" fill="#3a78c8"/></svg>
<div class="a" style="left:97px;top:312.5px;width:44px;height:8px;overflow:hidden"><div class="t" style="left:3.8px;top:0;transform:scaleX(.86);color:#111">Активный объе</div></div>
<div class="t" style="left:119px;top:320.6px;transform:scaleX(.86);color:#111">15</div>
<div class="a" style="left:97px;top:349.3px;width:44px;height:8px;overflow:hidden"><div class="t" style="left:1.6px;top:0;transform:scaleX(.86);color:#111">Активный объект</div></div>
<svg style="left:117px;top:369px" width="14" height="14"><path d="M0.5 2.5L2.5 0.5H5L6.5 2L8 0.5H10.5L12.5 2.5V7L6.5 13L0.5 7Z" fill="#ee0000" stroke="#400000" stroke-width="0.6"/></svg>
<div class="a" style="left:97px;top:384.4px;width:44px;height:8px;overflow:hidden"><div class="t" style="left:1.6px;top:0;transform:scaleX(.86);color:#111">Активный объект</div></div>
<svg style="left:116.5px;top:403.5px" width="15" height="15"><path d="M7.5 0.3L14.7 7.5L7.5 14.7L0.3 7.5Z" fill="#0e5a5a"/><path d="M7.5 2.8L12.2 7.5L7.5 12.2L2.8 7.5Z" fill="#2a9a9a"/><path d="M2.8 7.5L7.5 2.8L7.5 7.5Z" fill="#48c8b8"/></svg>
<div class="a" style="left:97px;top:419px;width:44px;height:8px;overflow:hidden"><div class="t" style="left:1.6px;top:0;transform:scaleX(.86);color:#111">Активный объект</div></div>
<svg style="left:116px;top:444px" width="16" height="4"><path d="M0.5 3.5V0.5H15" fill="none" stroke="#40e040" stroke-width="0.9"/><rect x="6" y="1.5" width="3" height="1.2" fill="#30a030"/></svg>
<div class="a" style="left:97px;top:456px;width:44px;height:4px;overflow:hidden"><div class="t" style="left:1.6px;top:0;transform:scaleX(.86);color:#111">Активный объект</div></div>
<div class="a" style="left:152px;top:49px;width:639px;height:410px;background:#dfdfdf;"></div>
<div class="a" style="left:152px;top:48px;width:647px;height:2px;background:#a4a4a4;"></div>
<div class="a" style="left:790px;top:50px;width:9px;height:3px;background:#fff;border:1px solid #a0a0a0;border-top:none"></div>
<div class="a" style="left:284px;top:50px;width:10px;height:5px;background:#22e022;"></div>
<div class="a" style="left:273px;top:72px;width:484px;height:365px;background:#ececec;"></div>
<div class="a" style="left:274px;top:73px;width:483px;height:363px;background:#7a7a7a;"></div>
<div class="a" style="left:275px;top:74px;width:481px;height:361px;background:#000;"></div>
<div class="a" style="left:756px;top:73px;width:1px;height:363px;background:#bdbdbd;"></div>
<svg style="left:699px;top:59px" width="60" height="11">
<defs><linearGradient id="bc" x1="0" y1="0" x2="0" y2="1"><stop offset="0" stop-color="#c07858"/><stop offset="0.45" stop-color="#f4d0c0"/><stop offset="1" stop-color="#a05a40"/></linearGradient>
<linearGradient id="bb" x1="0" y1="0" x2="0" y2="1"><stop offset="0" stop-color="#a86a30"/><stop offset="0.4" stop-color="#e0b070"/><stop offset="0.7" stop-color="#c08848"/><stop offset="1" stop-color="#7a4a20"/></linearGradient></defs>
<path d="M1 4.9Q15 3 29 2.2V7.8Q15 6.8 1 4.9Z" fill="url(#bc)"/>
<path d="M29 1.2L57 1.2Q58.6 1.2 58.6 3V7Q58.6 8.8 57 8.8L29 8.8Q27.5 5 29 1.2Z" fill="url(#bb)"/>
<path d="M29.5 2Q28.6 5 29.5 8" stroke="#fff0d0" stroke-width="1.2" fill="none"/>
</svg>
<svg style="left:212px;top:112px" width="14" height="80">
<defs><linearGradient id="kb" x1="0" y1="0" x2="1" y2="0"><stop offset="0" stop-color="#fafafa"/><stop offset="0.55" stop-color="#ece6e6"/><stop offset="1" stop-color="#a8a0a0"/></linearGradient></defs>
<path d="M3.2 3.5Q3 0.8 6.5 0.8Q10.8 1 10.8 3.5L10.2 36.5H3.6Z" fill="#0c0c0c"/>
<circle cx="7" cy="11" r="0.7" fill="#bbb"/><circle cx="7" cy="21.5" r="0.7" fill="#bbb"/><circle cx="7" cy="32" r="0.7" fill="#bbb"/>
<rect x="3" y="36" width="7.5" height="2.5" fill="#3a3a3a"/>
<path d="M2.6 38.5H10.2Q10.6 55 8.6 66Q7 74 5.8 78.5Q2.4 62 2.6 38.5Z" fill="url(#kb)"/>
</svg>
<svg style="left:236px;top:123px" width="14" height="21"><path d="M4,0 L10,0 L10,1 L11,1 L11,2 L12,2 L12,4 L14,4 L14,17 L12,17 L12,19 L11,19 L11,20 L10,20 L10,21 L4,21 L4,20 L3,20 L3,19 L2,19 L2,17 L0,17 L0,4 L2,4 L2,2 L3,2 L3,1 L4,1Z M5,4 L9,4 L9,5 L10,5 L10,6 L11,6 L11,5 L10,5 L10,16 L11,16 L11,15 L10,15 L10,16 L9,16 L9,17 L5,17 L5,16 L4,16 L4,15 L3,15 L3,16 L4,16 L4,5 L3,5 L3,6 L4,6 L4,5 L5,5Z" fill="#0a0202" fill-rule="evenodd"/></svg>
<svg style="left:230px;top:155px" width="27" height="44"><path d="M7,0 L20,0 L20,2 L22,2 L22,4 L24,4 L24,7 L27,7 L27,37 L24,37 L24,40 L22,40 L22,42 L20,42 L20,44 L7,44 L7,42 L5,42 L5,40 L3,40 L3,37 L0,37 L0,7 L3,7 L3,4 L5,4 L5,2 L7,2Z M9,7 L18,7 L18,8 L19,8 L19,9 L20,9 L20,9 L20,9 L20,35 L20,35 L20,35 L19,35 L19,36 L18,36 L18,37 L9,37 L9,36 L8,36 L8,35 L7,35 L7,35 L7,35 L7,9 L7,9 L7,9 L8,9 L8,8 L9,8Z" fill="#0a0202" fill-rule="evenodd"/></svg>
<svg style="left:212px;top:212px" width="47" height="74"><path d="M12,0 L35,0 L35,4 L39,4 L39,8 L43,8 L43,12 L47,12 L47,62 L43,62 L43,66 L39,66 L39,70 L35,70 L35,74 L12,74 L12,70 L8,70 L8,66 L4,66 L4,62 L0,62 L0,12 L4,12 L4,8 L8,8 L8,4 L12,4Z M16,11 L31,11 L31,13 L33,13 L33,15 L35,15 L35,16 L36,16 L36,58 L35,58 L35,59 L33,59 L33,61 L31,61 L31,63 L16,63 L16,61 L14,61 L14,59 L12,59 L12,58 L11,58 L11,16 L12,16 L12,15 L14,15 L14,13 L16,13Z" fill="#0a0202" fill-rule="evenodd"/></svg>
<svg style="left:358.5px;top:179.3px" width="15.0" height="15.0">
<path d="M7.5 0.3L14.7 7.5L7.5 14.7L0.3 7.5Z" fill="#c8e0e0"/>
<path d="M7.5 1.3L13.7 7.5L7.5 13.7L1.3 7.5Z" fill="#1a7272"/>
<path d="M7.5 1.3L13.7 7.5L7.5 7.5Z" fill="#3aa8a8"/>
<path d="M1.3 7.5L7.5 13.7L7.5 7.5Z" fill="#105050"/>
<path d="M7.5 3.75L11.25 7.5L7.5 11.25L3.75 7.5Z" fill="#228a8a"/>
</svg>
<svg style="left:329.5px;top:212.0px" width="15.0" height="15.0">
<path d="M7.5 0.3L14.7 7.5L7.5 14.7L0.3 7.5Z" fill="#c8e0e0"/>
<path d="M7.5 1.3L13.7 7.5L7.5 13.7L1.3 7.5Z" fill="#1a7272"/>
<path d="M7.5 1.3L13.7 7.5L7.5 7.5Z" fill="#3aa8a8"/>
<path d="M1.3 7.5L7.5 13.7L7.5 7.5Z" fill="#105050"/>
<path d="M7.5 3.75L11.25 7.5L7.5 11.25L3.75 7.5Z" fill="#228a8a"/>
<path d="M7.5 4.65L10.35 7.5L7.5 10.35L4.65 7.5Z" fill="#30ee30"/></svg>
<div class="a" style="left:345px;top:196px;width:335px;height:189px;background:#787878;"></div>
<div class="a" style="left:346px;top:197px;width:333px;height:187px;background:#fff;"></div>
<div class="a" style="left:347px;top:198px;width:331px;height:185px;background:#fdf8ee;"></div>
<div class="a" style="left:359px;top:209px;width:307px;height:162px;background:#fff;"></div>
<div class="a" style="left:360px;top:211px;width:305px;height:159px;background:#a0a098;"></div>
<div class="a" style="left:361px;top:212px;width:303px;height:157px;background:#000;"></div>
<div class="a" style="left:544px;top:212px;width:120px;height:22px;background:transparent;border:4px solid #22ee22;border-bottom-width:3px"></div>
<div class="t" style="left:583.5px;top:215.5px;font-size:14.4px;line-height:17px;color:#22ee22">ЖМИ</div>
<div class="a" style="left:361px;top:354px;width:91px;height:15px;overflow:hidden;background:#000"><div class="t" style="left:9.3px;top:-2.4px;font-size:14.5px;line-height:17px;color:#fff">Сохранить</div></div>
<div class="a" style="left:361px;top:354px;width:91px;height:1px;background:#d8c800;"></div>
<div class="a" style="left:361px;top:355px;width:2px;height:11px;background:#888;"></div>
<div class="a" style="left:361px;top:366px;width:89px;height:3px;background:#22ee22;"></div>
<div class="a" style="left:450px;top:354px;width:2px;height:15px;background:#ee1010;"></div>
<svg style="left:505px;top:350px" width="12" height="13"><path d="M0 2H1V1H2V0H5V1H6V2H7V1H8V0H11V1H12V7H11V8H10V9H9V10H8V11H7V12H6V13H5V12H4V11H3V10H2V9H1V8H0Z" fill="#ff0000" transform="translate(0,0)"/></svg>
<div class="a" style="left:352px;top:393px;width:54px;height:15px;background:#ffff00;"></div>
<div class="t" style="left:351px;top:391.5px;width:54px;text-align:center;font-size:14.5px;line-height:17px;font-weight:bold;color:#fff;-webkit-text-stroke:0.6px #fff">0</div>
<div class="t" style="left:523px;top:393.5px;font-size:12.6px;line-height:15px;font-weight:bold;color:#f4f4f0;letter-spacing:0.1px">Действие:</div>
<svg style="left:621px;top:389px" width="40" height="22"><path d="M1.5 2.5H3V1H12V2.5H13.5V18.5H12V20H3V18.5H1.5Z M4.2 3.8V17.2H10.8V3.8Z" fill="#fffaf0" fill-rule="evenodd"/><path d="M15.5 1.5H18L26.5 15V1.5H29V20H26.5L18 6.5V20H15.5Z" fill="#f4f6ff"/><path d="M31 8.5H37.5V15.5H31Z M33 10.3V13.7H35.5V10.3Z" fill="#fff" fill-rule="evenodd"/><rect x="30.5" y="17.5" width="7.5" height="2" fill="#fff"/><path d="M1.8 2.5V18.5" stroke="#d0c8a0" stroke-width="0.8"/><path d="M16 1.5V20" stroke="#a0c0ff" stroke-width="0.8"/><path d="M37.8 8.5V15.5" stroke="#ff9090" stroke-width="0.6"/></svg>
<svg style="left:686px;top:212px" width="54" height="36">
<path d="M2 3H48L50 5V11H42L40 15Q37 19 32 17L31 13H2Z" fill="#1c1c1c"/>
<circle cx="31" cy="15" r="3" fill="none" stroke="#2a2a2a" stroke-width="1.2"/>
<defs><linearGradient id="pg" x1="0" y1="0" x2="1" y2="1"><stop offset="0" stop-color="#c8c8c8"/><stop offset="1" stop-color="#6a6a6a"/></linearGradient></defs>
<path d="M37 11.5L45 10.5L50 30L42 32.5Z" fill="url(#pg)" stroke="#999" stroke-width="0.5"/>
</svg>
<svg style="left:465px;top:75px" width="85" height="125">
<defs>
<clipPath id="w1"><ellipse cx="0" cy="0" rx="22.5" ry="5.6"/></clipPath>
<clipPath id="w2"><ellipse cx="0" cy="0" rx="20.5" ry="4.6"/></clipPath>
<linearGradient id="hd" x1="0" y1="0" x2="1" y2="1"><stop offset="0" stop-color="#ffe060"/><stop offset="1" stop-color="#e8a010"/></linearGradient>
</defs>
<path d="M13 3.5Q22 8 25.4 22.4M11.5 5Q20.5 9.5 23.8 22.4" fill="none" stroke="#a01010" stroke-width="1"/>
<g transform="translate(50.7,33.35) rotate(-63.1)">
<ellipse cx="0" cy="0" rx="22.5" ry="5.6" fill="#cdd0dc"/>
<g clip-path="url(#w1)" fill="#e01010"><rect x="-17" y="-8" width="5" height="16"/><rect x="-5" y="-8" width="5" height="16"/><rect x="7" y="-8" width="5" height="16"/></g>
</g>
<g transform="translate(58.7,44.5) rotate(-28.3)">
<ellipse cx="0" cy="0" rx="20.5" ry="4.6" fill="#cdd0dc"/>
<g clip-path="url(#w2)" fill="#e01010"><rect x="-12" y="-8" width="4.5" height="16"/><rect x="0" y="-8" width="4.5" height="16"/><rect x="15" y="-8" width="6" height="16"/></g>
</g>
<path d="M25.8 52.6L38.8 51.5L50.7 59L47.4 67.7L37.7 69.9L36.6 75.3L30 76Z" fill="#f0a020"/>
<path d="M37.3 75L38 68.4L47.4 60.3L56.7 63L60 75L70 89.7L78 101.7L78.7 106.4L74 111L63.4 113.7L66 100.4L56.7 88.4L54 81.7L56.7 95L62.7 104.4L62 108.4L56.7 115.7L50 117.7L49.4 113.7L52.7 99L47.4 84.4L40.7 80.4Z" fill="#b80000"/>
<path d="M25.8 55.8L27 54.7L32 55L36 62L38.2 81.8L29.6 80.7Z" fill="#f8d040"/>
<path d="M25.8 54.7L22.6 65.5" stroke="#7a3a10" stroke-width="0.9"/>
<path d="M28 54.5L33 70" stroke="#a05010" stroke-width="0.5"/>
<circle cx="32.8" cy="59" r="3" fill="#e81010"/><circle cx="31.2" cy="67.7" r="2.7" fill="#e81010"/>
<path d="M29 80.7L37.7 81.8L38.2 86.5L29 85Z" fill="#c80000"/>
<path d="M28 85.5L36 85L38.5 89L37 92.6L31 92.6L28.5 89Z" fill="#f6d040"/>
<path d="M20.3 97Q27.7 79 43.2 97" fill="none" stroke="#1a3a80" stroke-width="0.9"/>
<ellipse cx="25" cy="42" rx="15" ry="13" fill="url(#hd)"/>
<path d="M8.5 35L9 29L12 27L12.5 23.5L16 25L18 21L21.5 23.5L24.5 21L27.5 23L31 21.5L33.5 24.5L37.5 24.5L38.5 28.5L40 31L39 35.5Q25 30 9 37Z" fill="#ee1111"/>
<circle cx="17.7" cy="41.3" r="5.3" fill="#111"/>
<circle cx="17.7" cy="41.3" r="2.4" fill="#e81010"/>
<path d="M12.5 45Q19 54 31 52.5" fill="none" stroke="#111" stroke-width="3.8"/>
<circle cx="27.7" cy="37.7" r="2.3" fill="#e81010"/>
<path d="M7 48.5L12.5 45.5L12.5 50.5Z" fill="#f06020"/>
<path d="M20.3 96.4H43.9L43.2 102.3H21Z" fill="#ee1515"/>
<path d="M21 102.3H43.2L40.2 117.8H24Z" fill="#3a78c8"/>
<path d="M21.5 108H42" stroke="#2a5aa0" stroke-width="0.5"/>
</svg>
<svg style="left:760px;top:68px" width="20" height="376">
<defs><linearGradient id="vs" x1="0" y1="0" x2="1" y2="0"><stop offset="0" stop-color="#38aaa6"/><stop offset="0.5" stop-color="#127070"/><stop offset="1" stop-color="#052a2a"/></linearGradient>
<linearGradient id="vf" x1="0" y1="0" x2="0" y2="1"><stop offset="0" stop-color="#fff" stop-opacity="0.7"/><stop offset="0.1" stop-color="#fff" stop-opacity="0.05"/><stop offset="0.4" stop-color="#fff" stop-opacity="0.12"/><stop offset="0.55" stop-color="#000" stop-opacity="0.15"/><stop offset="0.8" stop-color="#000" stop-opacity="0.2"/><stop offset="0.95" stop-color="#222" stop-opacity="0.9"/><stop offset="1" stop-color="#aaa" stop-opacity="1"/></linearGradient></defs>
<path d="M10 2L17 187L10 373L3 187Z" fill="url(#vs)"/>
<path d="M10 2L17 187L10 373L3 187Z" fill="url(#vf)"/>
</svg>
<svg style="left:264px;top:433px" width="500" height="18">
<defs><linearGradient id="hs" x1="0" y1="0" x2="0" y2="1"><stop offset="0" stop-color="#50c0b8"/><stop offset="0.45" stop-color="#168080"/><stop offset="1" stop-color="#083838"/></linearGradient>
<linearGradient id="hf" x1="0" y1="0" x2="1" y2="0"><stop offset="0" stop-color="#fff" stop-opacity="0.9"/><stop offset="0.12" stop-color="#fff" stop-opacity="0"/><stop offset="0.8" stop-color="#000" stop-opacity="0"/><stop offset="0.89" stop-color="#000" stop-opacity="0.85"/><stop offset="0.95" stop-color="#222" stop-opacity="1"/><stop offset="1" stop-color="#999" stop-opacity="1"/></linearGradient></defs>
<path d="M2 9.5L226 2L498 8.5L226 15.5Z" fill="url(#hs)"/>
<path d="M2 9.5L226 2L498 8.5L226 15.5Z" fill="url(#hf)"/>
</svg>
<div class="a" style="left:275px;top:433px;width:481px;height:2px;background:#000;"></div>
<div class="a" style="left:791px;top:52px;width:8px;height:407px;background:#f0f0f0;"></div>
<div class="a" style="left:791px;top:157px;width:7px;height:198px;background:#cdcdcd;"></div>
<svg style="left:792px;top:54px" width="6" height="5"><path d="M1 3.5L3 1.5L5 3.5" fill="none" stroke="#444" stroke-width="0.8"/></svg>
<svg style="left:792px;top:453px" width="6" height="5"><path d="M1 1.5L3 3.5L5 1.5" fill="none" stroke="#444" stroke-width="0.8"/></svg>
<div class="a" style="left:152px;top:459px;width:647px;height:9px;background:#f0f0f0;"></div>
<div class="a" style="left:265px;top:460px;width:366px;height:7px;background:#cdcdcd;"></div>
<div class="a" style="left:152px;top:460px;width:3px;height:7px;background:#fff;border:1px solid #888;border-top:none"></div>
<svg style="left:156px;top:461px" width="5" height="6"><path d="M3.5 1L1.5 3L3.5 5" fill="none" stroke="#444" stroke-width="0.8"/></svg>
<svg style="left:785px;top:461px" width="5" height="6"><path d="M1.5 1L3.5 3L1.5 5" fill="none" stroke="#444" stroke-width="0.8"/></svg>
<svg style="left:792px;top:461px" width="6" height="6"><path d="M5 1L1 5M5 3L3 5" stroke="#bbb" stroke-width="0.6"/></svg>
<div class="a" style="left:802px;top:49px;width:90px;height:10px;background:#cddcec;"></div>
<div class="t" style="left:803.5px;top:50px;font-size:6.5px;color:#111;transform:scaleX(0.87);">Свойства</div>
<svg style="left:876.5px;top:51.5px" width="5" height="6"><rect x="0.8" y="0.5" width="3.2" height="3.2" fill="#222"/><rect x="1.8" y="1.3" width="1.2" height="1.5" fill="#ddd"/><path d="M2.4 3.7V5.5" stroke="#222" stroke-width="0.7"/></svg>
<div class="a" style="left:885px;top:51px;width:6px;height:6px;background:#e04848;"></div>
<svg style="left:885px;top:51px" width="6" height="6"><path d="M1.5 1.5L4.5 4.5M4.5 1.5L1.5 4.5" stroke="#fff" stroke-width="0.8"/></svg>
<div class="a" style="left:893px;top:51px;width:7px;height:49px;background:#f2f2f2;border:1px solid #c8c8c8;border-right:none"></div>
<div class="t" style="left:901px;top:53px;transform:rotate(90deg) scaleX(.85);color:#707070">Панель слоёв</div>
<div class="a" style="left:2px;top:469px;width:105px;height:10px;background:#f0f0f0;border:1px solid #d8d8d8;border-bottom:none"></div>
<div class="t" style="left:4px;top:470.5px;font-size:6.5px;color:#555;transform:scaleX(0.87);">Панель инструментов 'Библиотека'</div>
<div class="a" style="left:0px;top:479px;width:900px;height:10px;background:#f0f0f0;"></div>
<div class="a" style="left:0px;top:478px;width:900px;height:1px;background:#dadada;"></div>
<div class="t" style="left:2px;top:480.5px;font-size:6.5px;color:#111;transform:scaleX(0.87);">Готово</div>
<div class="a" style="left:709px;top:480px;width:1px;height:9px;background:#e2e2e2;"></div>
<div class="a" style="left:747px;top:480px;width:1px;height:9px;background:#e2e2e2;"></div>
<div class="a" style="left:786px;top:480px;width:1px;height:9px;background:#e2e2e2;"></div>
<div class="a" style="left:797px;top:480px;width:1px;height:9px;background:#e2e2e2;"></div>
<div class="a" style="left:829px;top:480px;width:1px;height:9px;background:#e2e2e2;"></div>
<div class="a" style="left:862px;top:480px;width:1px;height:9px;background:#e2e2e2;"></div>
<div class="a" style="left:873px;top:480px;width:1px;height:9px;background:#e2e2e2;"></div>
<div class="a" style="left:887px;top:480px;width:1px;height:9px;background:#e2e2e2;"></div>
<svg style="left:711px;top:482px" width="5" height="5"><path d="M0.5 0.5V3M0.5 0.5H3M0.5 0.5L4 4" stroke="#555" stroke-width="0.6" fill="none"/></svg>
<svg style="left:749px;top:481px" width="6" height="6"><rect x="0.5" y="0.5" width="5" height="5" fill="none" stroke="#666" stroke-width="0.6"/><path d="M1.5 1.5L4.5 4.5" stroke="#666" stroke-width="0.6"/></svg>
<svg style="left:799px;top:481px" width="4" height="6"><path d="M0.5 0.5V5L1.8 3.8L3.5 4.5Z" fill="#111"/></svg>
<div class="t" style="left:805.5px;top:480.5px;font-size:6.5px;color:#111;transform:scaleX(0.87);">62, 435</div>
<svg style="left:831px;top:481px" width="6" height="7"><path d="M0.5 1H5.5L3.5 3.5V6L2.5 5.5V3.5Z" fill="none" stroke="#888" stroke-width="0.6"/></svg>
<div class="t" style="left:837.5px;top:480.5px;font-size:6.5px;color:#111;transform:scaleX(0.87);">0</div>
<div class="t" style="left:875px;top:480.5px;font-size:6.5px;color:#888;transform:scaleX(0.87);">CAP</div>
<div class="t" style="left:888px;top:480.5px;font-size:6.5px;color:#111;transform:scaleX(0.87);">NUM</div>
<div class="a" style="left:0px;top:489px;width:900px;height:20px;background:#121212;"></div>
<div class="a" style="left:22px;top:489px;width:136px;height:20px;background:#3b3b3b;"></div>
<svg style="left:7px;top:495px" width="9" height="9"><path d="M0 1.2L3.8 0.7V4.2H0ZM4.4 0.6L9 0V4.2H4.4ZM0 4.8H3.8V8.3L0 7.8ZM4.4 4.8H9V9L4.4 8.4Z" fill="#fff"/></svg>
<svg style="left:27px;top:494px" width="9" height="10"><circle cx="5.5" cy="3.8" r="2.6" fill="none" stroke="#ddd" stroke-width="0.9"/><path d="M3.6 5.8L1 8.6" stroke="#ddd" stroke-width="1"/></svg>
<div class="t" style="left:41.5px;top:494.5px;font-size:8px;line-height:10px;color:#d8d8d8;transform:scaleX(.9)">Поиск</div>
<div class="t" style="left:160px;top:495px;font-size:6.5px;color:#fff;transform:scaleX(0.87);">Ссылки</div>
<svg style="left:390px;top:491px" width="140" height="18">
<circle cx="7.5" cy="7.5" r="5.5" fill="#1f8fd8"/><path d="M3 8Q5 3 10 4Q13 6 12 9H6Q7 11 12 11Q9 14 5 12Q2 10 3 8Z" fill="#38c070"/><circle cx="5" cy="11" r="2.6" fill="#666"/><text x="3.8" y="12.8" font-size="4" fill="#fff" font-family="Liberation Sans">8</text>
<path d="M26 5L32 1.5L38 5V12H26Z" fill="#1e88d8"/><path d="M26 5L32 9L38 5" fill="none" stroke="#fff" stroke-width="0.8"/><circle cx="37" cy="11.5" r="3.2" fill="#444" stroke="#111" stroke-width="0.6"/><text x="34.6" y="13" font-size="4" fill="#fff" font-family="Liberation Sans">18</text>
<path d="M49 3H54L55 4.5H59V13H49Z" fill="#f0c040"/><rect x="49" y="6.5" width="10" height="2" fill="#fde080"/><rect x="52" y="9.5" width="4" height="2.5" fill="#2a78c8"/>
<circle cx="77" cy="7.5" r="5.5" fill="#ea4335"/><path d="M77 7.5L82.5 7.5A5.5 5.5 0 0 1 74.2 12.3Z" fill="#34a853"/><path d="M77 7.5L74.2 12.3A5.5 5.5 0 0 1 72 5Z" fill="#fbbc05"/><circle cx="77" cy="7.5" r="2.2" fill="#4285f4" stroke="#fff" stroke-width="0.8"/><rect x="78" y="8" width="4" height="5" fill="#6a4a2a"/>
<rect x="67" y="15.6" width="20" height="1" fill="#8ab4e0"/>
<circle cx="99" cy="7.5" r="5" fill="#000"/><path d="M99.5 3.5V10A1.6 1.6 0 1 1 98 8.4M99.5 3.5Q100.5 5.5 102 5.6" fill="none" stroke="#fff" stroke-width="1"/><path d="M100 3.8V10.4" stroke="#ee1d52" stroke-width="0.5"/>
<rect x="112" y="-2" width="22" height="20" fill="#2c2c2c"/><circle cx="122" cy="7.5" r="5.4" fill="#6a3aa8"/><circle cx="122" cy="7.5" r="3.4" fill="#c090f0"/><circle cx="122" cy="7.5" r="1.6" fill="#e03060"/>
<rect x="112" y="15.6" width="22" height="1" fill="#8ab4e0"/>
</svg>
<svg style="left:770px;top:494px" width="10" height="6"><path d="M1 5L5 1.5L9 5" fill="none" stroke="#ddd" stroke-width="0.9"/></svg>
<svg style="left:785px;top:494px" width="8" height="10"><rect x="1.5" y="0.5" width="5" height="3.5" rx="0.8" fill="none" stroke="#bbb" stroke-width="0.7"/><rect x="1" y="4.5" width="6" height="4.5" rx="1.2" fill="none" stroke="#bbb" stroke-width="0.7"/><circle cx="4" cy="6.5" r="1" fill="#bbb"/></svg>
<svg style="left:794px;top:494px" width="10" height="9"><rect x="2" y="0.5" width="7.5" height="5.5" fill="none" stroke="#ccc" stroke-width="0.8"/><path d="M0.5 3H3V8H0.5Z" fill="#ccc"/></svg>
<svg style="left:805px;top:494px" width="9" height="9"><path d="M0.5 3H2.5L5 0.5V8L2.5 5.8H0.5Z" fill="#ccc"/><path d="M6.5 2.5Q8 4.2 6.5 6" fill="none" stroke="#ccc" stroke-width="0.6"/></svg>
<svg style="left:816px;top:495px" width="13" height="8"><rect x="0.5" y="0.5" width="11" height="6" rx="0.8" fill="#444" stroke="#999" stroke-width="0.8"/><path d="M3 4.5H9" stroke="#aaa" stroke-width="0.7"/></svg>
<div class="t" style="left:833px;top:494.5px;font-size:6.5px;color:#e8e8e8;transform:scaleX(0.82);">DEU</div>
<div class="t" style="left:855.8px;top:490.5px;font-size:6.5px;color:#e8e8e8;transform:scaleX(0.8);">17:59</div>
<div class="t" style="left:849.5px;top:499px;font-size:6.5px;color:#e8e8e8;transform:scaleX(0.82);">01.07.2023</div>
<svg style="left:883px;top:493px" width="12" height="12"><path d="M0.5 0.5H9V7H3L0.5 9Z" fill="none" stroke="#ddd" stroke-width="0.9"/><circle cx="8" cy="8.5" r="3" fill="#222" stroke="#ddd" stroke-width="0.6"/><text x="6.8" y="10.3" font-size="4.5" fill="#fff" font-family="Liberation Sans">8</text></svg>
</body></html>
